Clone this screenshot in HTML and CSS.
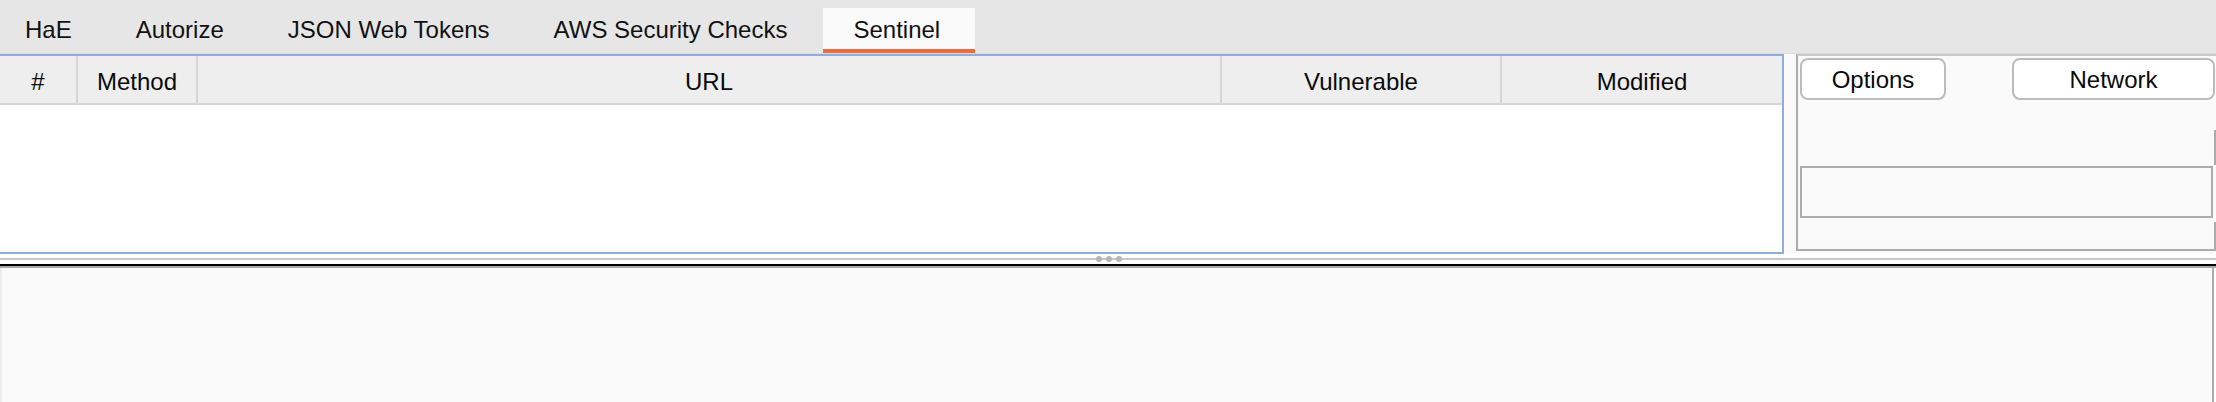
FILE: index.html
```html
<!DOCTYPE html>
<html>
<head>
<meta charset="utf-8">
<title>Sentinel</title>
<link rel="stylesheet" href="styles.css">
</head>
<body>
<div class="app">
  <div class="tabbar">
    <div class="tab first">HaE</div>
    <div class="tab">Autorize</div>
    <div class="tab">JSON Web Tokens</div>
    <div class="tab">AWS Security Checks</div>
    <div class="tab active">Sentinel</div>
  </div>
  <div class="top-split">
    <div class="table">
      <div class="thead">
        <div class="th">#</div>
        <div class="th">Method</div>
        <div class="th">URL</div>
        <div class="th">Vulnerable</div>
        <div class="th last">Modified</div>
      </div>
      <div class="tbody"></div>
    </div>
    <div class="side-panel">
      <div class="btn-row">
        <button class="btn btn-options">Options</button>
        <button class="btn btn-network">Network</button>
      </div>
      <div class="side-body">
        <div class="field-row"><div class="field"></div></div>
      </div>
    </div>
  </div>
  <div class="splitter"><div class="grip"><i></i><i></i><i></i></div></div>
  <div class="divider"></div>
  <div class="bottom-panel"></div>
</div>
</body>
</html>
```

FILE: styles.css
```css
* { box-sizing: border-box; }
html, body {
  margin: 0;
  padding: 0;
  background: #ffffff;
}
body {
  width: 2216px;
  height: 402px;
  overflow: hidden;
  font-family: "Liberation Sans", Arial, Helvetica, sans-serif;
  font-size: 24px;
  color: #111111;
}
.app {
  display: flex;
  flex-direction: column;
  height: 402px;
}

/* Tabs */
.tabbar {
  display: flex;
  align-items: flex-start;
  height: 54px;
  background: #e6e6e6;
  border-bottom: 1px solid #dcdcdc;
  flex: none;
}
.tab {
  margin-top: 8px;
  height: 45px;
  padding: 2px 32px 0 32px;
  display: flex;
  align-items: center;
  line-height: 28px;
  white-space: nowrap;
  color: #111111;
  border-bottom: 4px solid transparent;
}
.tab.first { padding-left: 25px; }
.tab.active {
  margin-left: 4px;
  padding-left: 30px;
  padding-right: 35px;
  background: #fafafa;
  border-bottom-color: #e96d3e;
}

/* Top split */
.top-split {
  display: flex;
  height: 200px;
  flex: none;
  background: #fafafa;
}
.table {
  width: 1784px;
  height: 200px;
  display: flex;
  flex-direction: column;
  border-top: 2px solid #8fadd8;
  border-right: 2px solid #8fadd8;
  border-bottom: 2px solid #8fadd8;
  background: #ffffff;
}
.thead {
  display: grid;
  grid-template-columns: 78px 120px 1024px 280px 1fr;
  height: 49px;
  background: #eeeeee;
  border-bottom: 2px solid #d5d5d5;
}
.th {
  display: flex;
  align-items: center;
  justify-content: center;
  padding-top: 4px;
  border-right: 2px solid #d6d6d6;
  color: #0a0a0a;
  line-height: 28px;
}
.th.last { border-right: none; }
.tbody {
  flex: 1;
  background: #ffffff;
}

.side-panel {
  margin-left: 12px;
  width: 420px;
  height: 197px;
  display: flex;
  flex-direction: column;
  background: #fafafa;
  border-left: 2px solid #ababab;
  border-top: 2px solid #c9c9c9;
  border-bottom: 2px solid #ababab;
}
.btn-row {
  display: flex;
  justify-content: space-between;
  padding: 2px 1px 0 2px;
  height: 44px;
  flex: none;
}
.btn {
  height: 42px;
  margin: 0;
  padding: 2px 0 0 0;
  border: 2px solid #bcbcbc;
  border-radius: 8px;
  background: #ffffff;
  font-family: "Liberation Sans", Arial, Helvetica, sans-serif;
  font-size: 24px;
  color: #0a0a0a;
  text-align: center;
}
.btn-options { width: 146px; }
.btn-network { width: 203px; }
.side-body {
  margin-top: 30px;
  flex: 1;
  border-right: 2px solid #ababab;
}
.field-row {
  margin-top: 35px;
  margin-right: -2px;
  height: 57px;
  padding: 1px 3px 0 2px;
  background: #fafafa;
}
.field {
  width: 413px;
  height: 52px;
  border: 2px solid #acacac;
  background: #fafafa;
}

/* Splitter */
.splitter {
  height: 10px;
  flex: none;
  display: flex;
  align-items: center;
  justify-content: center;
  background: linear-gradient(#c9c5c9, #c9c5c9) center / 100% 2px no-repeat, #ffffff;
}
.grip {
  display: flex;
  gap: 4px;
  margin-left: 2px;
}
.grip i {
  display: block;
  width: 6px;
  height: 6px;
  border-radius: 50%;
  background: #b6b6b6;
}
.divider {
  height: 4px;
  flex: none;
  border-top: 2px solid #000000;
  border-bottom: 2px solid #a9a9a9;
}
.bottom-panel {
  flex: 1;
  margin-right: 2px;
  background: #fafafa;
  border-left: 2px solid #ececec;
  border-right: 2px solid #ababab;
}
```
